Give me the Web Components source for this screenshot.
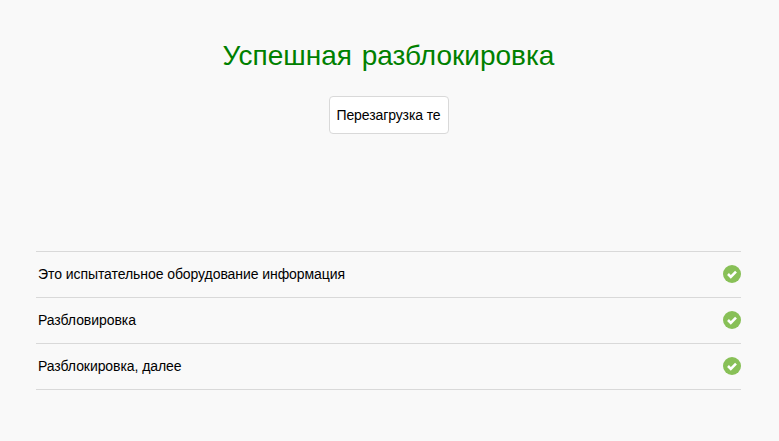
<!DOCTYPE html>
<html lang="ru">
<head>
<meta charset="utf-8">
<title>Успешная разблокировка</title>
<style>
  html, body { margin: 0; height: 100%; background: #f9f9f9; }
  body { font-family: "Liberation Sans", "Noto Sans", sans-serif; color: #000; }
</style>
</head>
<body>
<unlock-page>
  <unlock-header title-text="Успешная разблокировка" action="Перезагрузка те"></unlock-header>
  <check-list>
    <check-row>Это испытательное оборудование информация</check-row>
    <check-row>Разбловировка</check-row>
    <check-row>Разблокировка, далее</check-row>
  </check-list>
</unlock-page>
<script>
class UnlockPage extends HTMLElement {
  connectedCallback() {
    this.attachShadow({ mode: 'open' });
    this.shadowRoot.innerHTML = `
      <style>
        :host {
          display: flex;
          flex-direction: column;
          height: 441px;
          box-sizing: border-box;
          padding: 0 38px 0 36px;
          overflow: hidden;
        }
      </style>
      <slot></slot>
    `;
  }
}
class UnlockHeader extends HTMLElement {
  connectedCallback() {
    this.attachShadow({ mode: 'open' });
    this.shadowRoot.innerHTML = `
      <style>
        :host {
          display: flex;
          flex-direction: column;
          align-items: center;
          height: 251px;
        }
        h1 {
          margin: 37px 0 0;
          font-size: 28px;
          line-height: 37px;
          font-weight: 400;
          color: #008000;
          white-space: nowrap;
          word-spacing: 2px;
        }
        button {
          margin-top: 22px;
          width: 120px;
          height: 38px;
          padding: 0;
          box-sizing: border-box;
          background: #fff;
          border: 1px solid #d9d9d9;
          border-radius: 4px;
          font: inherit;
          font-size: 14px;
          letter-spacing: -0.1px;
          color: #000;
        }
      </style>
      <h1></h1>
      <button type="button"></button>
    `;
    this.shadowRoot.querySelector('h1').textContent = this.getAttribute('title-text');
    this.shadowRoot.querySelector('button').textContent = this.getAttribute('action');
  }
}
class CheckList extends HTMLElement {
  connectedCallback() {
    this.attachShadow({ mode: 'open' });
    this.shadowRoot.innerHTML = `
      <style>
        :host {
          display: block;
          border-top: 1px solid #d9d9d9;
        }
      </style>
      <slot></slot>
    `;
  }
}
class CheckRow extends HTMLElement {
  connectedCallback() {
    this.attachShadow({ mode: 'open' });
    this.shadowRoot.innerHTML = `
      <style>
        :host {
          display: flex;
          align-items: center;
          justify-content: space-between;
          height: 46px;
          box-sizing: border-box;
          border-bottom: 1px solid #d9d9d9;
          padding: 0 0 2px 2px;
          font-size: 14px;
          letter-spacing: -0.07px;
        }
        svg { width: 18px; height: 18px; display: block; margin-top: 1px; }
      </style>
      <span><slot></slot></span>
      <svg viewBox="0 0 18 18" aria-hidden="true">
        <circle cx="9" cy="9" r="9" fill="#88c057"/>
        <path d="M5 9 L7.8 11.8 L13 6.6" fill="none" stroke="#fff" stroke-width="2.6"/>
      </svg>
    `;
  }
}
customElements.define('unlock-page', UnlockPage);
customElements.define('unlock-header', UnlockHeader);
customElements.define('check-list', CheckList);
customElements.define('check-row', CheckRow);
</script>
</body>
</html>
